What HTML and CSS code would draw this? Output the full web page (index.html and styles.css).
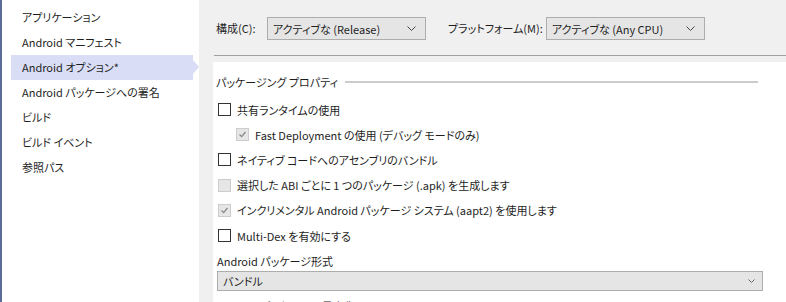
FILE: index.html
```html
<!DOCTYPE html>
<html lang="ja">
<head>
    <meta charset="UTF-8">
    <title>Android オプション</title>
    <link rel="stylesheet" href="styles.css">
</head>
<body>
    <div class="layout">
        <nav class="sidebar">
            <div class="nav-item">アプリケーション</div>
            <div class="nav-item">Android マニフェスト</div>
            <div class="nav-item active">Android オプション*</div>
            <div class="nav-item">Android パッケージへの署名</div>
            <div class="nav-item">ビルド</div>
            <div class="nav-item">ビルド イベント</div>
            <div class="nav-item">参照パス</div>
        </nav>

        <main class="main">
            <div class="toolbar">
                <span class="toolbar-label label-config">構成(C):</span>
                <div class="dropdown">
                    <span>アクティブな (Release)</span>
                    <svg class="chevron" viewBox="0 0 9 5" fill="none" stroke="currentColor" stroke-width="1">
                        <polyline points="0.5 0.5 4.5 4.5 8.5 0.5"></polyline>
                    </svg>
                </div>
                <span class="toolbar-label label-platform">プラットフォーム(M):</span>
                <div class="dropdown">
                    <span>アクティブな (Any CPU)</span>
                    <svg class="chevron" viewBox="0 0 9 5" fill="none" stroke="currentColor" stroke-width="1">
                        <polyline points="0.5 0.5 4.5 4.5 8.5 0.5"></polyline>
                    </svg>
                </div>
            </div>

            <div class="panel">
                <div class="section-title">
                    <span>パッケージング プロパティ</span>
                    <div class="section-line"></div>
                </div>

                <div class="option">
                    <span class="checkbox"></span>
                    <span>共有ランタイムの使用</span>
                </div>
                <div class="option indent">
                    <span class="checkbox disabled">
                        <svg viewBox="0 0 13 13" fill="none" stroke="currentColor" stroke-width="1.6">
                            <polyline points="3 6.5 5.5 9 10 3.5"></polyline>
                        </svg>
                    </span>
                    <span>Fast Deployment の使用 (デバッグ モードのみ)</span>
                </div>
                <div class="option">
                    <span class="checkbox"></span>
                    <span>ネイティブ コードへのアセンブリのバンドル</span>
                </div>
                <div class="option">
                    <span class="checkbox disabled"></span>
                    <span>選択した ABI ごとに 1 つのパッケージ (.apk) を生成します</span>
                </div>
                <div class="option">
                    <span class="checkbox disabled">
                        <svg viewBox="0 0 13 13" fill="none" stroke="currentColor" stroke-width="1.6">
                            <polyline points="3 6.5 5.5 9 10 3.5"></polyline>
                        </svg>
                    </span>
                    <span>インクリメンタル Android パッケージ システム (aapt2) を使用します</span>
                </div>
                <div class="option">
                    <span class="checkbox"></span>
                    <span>Multi-Dex を有効にする</span>
                </div>

                <div class="field-label">Android パッケージ形式</div>
                <div class="select">
                    <span>バンドル</span>
                    <svg class="chevron small" viewBox="0 0 7 4" fill="none" stroke="currentColor" stroke-width="1">
                        <polyline points="0.5 0.5 3.5 3.5 6.5 0.5"></polyline>
                    </svg>
                </div>
                <div class="field-label clipped">Android パッケージの最小化</div>
            </div>
        </main>
    </div>
</body>
</html>
```

FILE: styles.css
```css
:root {
    --strip: #5d6b99;
    --selected: #d9def6;
    --panel-gray: #f0f0f0;
    --text: #1e1e1e;
    --border: #adadad;
    --control: #e5e5e5;
}

* {
    margin: 0;
    padding: 0;
    box-sizing: border-box;
}

body {
    font-family: "Noto Sans CJK JP", "Noto Sans", sans-serif;
    font-size: 11px;
    font-feature-settings: "palt";
    color: var(--text);
    background: #ffffff;
    height: 302px;
    overflow: hidden;
}

.layout {
    display: flex;
    height: 302px;
}

/* left navigation */
.sidebar {
    width: 199px;
    flex-shrink: 0;
    border-left: 2px solid var(--strip);
    padding-top: 5px;
    background: #ffffff;
}

.nav-item {
    position: relative;
    width: 182px;
    height: 25px;
    line-height: 25px;
    margin-left: 9px;
    padding-left: 11px;
    white-space: nowrap;
}

.nav-item.active {
    background: var(--selected);
}

.nav-item.active::after {
    content: "";
    position: absolute;
    right: -6px;
    top: 5px;
    border-top: 7.5px solid transparent;
    border-bottom: 7.5px solid transparent;
    border-left: 6px solid var(--selected);
}

/* content */
.main {
    flex: 1;
    background: var(--panel-gray);
    display: flex;
    flex-direction: column;
    overflow: hidden;
}

.toolbar {
    flex-shrink: 0;
    height: 56px;
    margin-left: 15px;
    padding-top: 17px;
    padding-left: 2px;
    border-bottom: 1px solid #a0a0a0;
    display: flex;
    align-items: flex-start;
}

.toolbar-label {
    height: 23px;
    line-height: 23px;
    white-space: nowrap;
}

.label-config {
    width: 51px;
}

.label-platform {
    width: 98px;
    margin-left: 22px;
}

.dropdown {
    width: 159px;
    height: 23px;
    padding: 0 9px 0 5px;
    background: var(--control);
    border: 1px solid var(--border);
    display: flex;
    align-items: center;
    justify-content: space-between;
    white-space: nowrap;
}

.chevron {
    width: 9px;
    height: 5px;
    color: #444444;
}

.chevron.small {
    width: 7px;
    height: 4px;
    color: #666666;
}

.panel {
    flex: 1;
    margin-top: 6px;
    margin-left: 14px;
    background: #ffffff;
    padding: 10px 0 0 3px;
}

.section-title {
    display: flex;
    align-items: center;
    height: 20px;
    margin-bottom: 5px;
    padding-right: 28px;
}

.section-line {
    flex: 1;
    height: 2px;
    margin-left: 7px;
    background: #cccccc;
}

.option {
    display: flex;
    align-items: center;
    height: 25.2px;
    padding-left: 2px;
    white-space: nowrap;
}

.option.indent {
    padding-left: 20px;
}

.checkbox {
    width: 13px;
    height: 13px;
    border: 1px solid #333333;
    background: #ffffff;
    margin-right: 6px;
    display: flex;
    color: #8a8a8a;
}

.checkbox.disabled {
    border-color: #cccccc;
    background: #e6e6e6;
}

.checkbox svg {
    width: 11px;
    height: 11px;
}

.field-label {
    margin-top: 3px;
    height: 20px;
    line-height: 20px;
    padding-left: 1px;
}

.field-label.clipped {
    margin-top: 5px;
}

.select {
    width: 546px;
    height: 20px;
    margin-left: 1px;
    padding: 0 7px 0 5px;
    background: var(--control);
    border: 1px solid var(--border);
    display: flex;
    align-items: center;
    justify-content: space-between;
}
```
